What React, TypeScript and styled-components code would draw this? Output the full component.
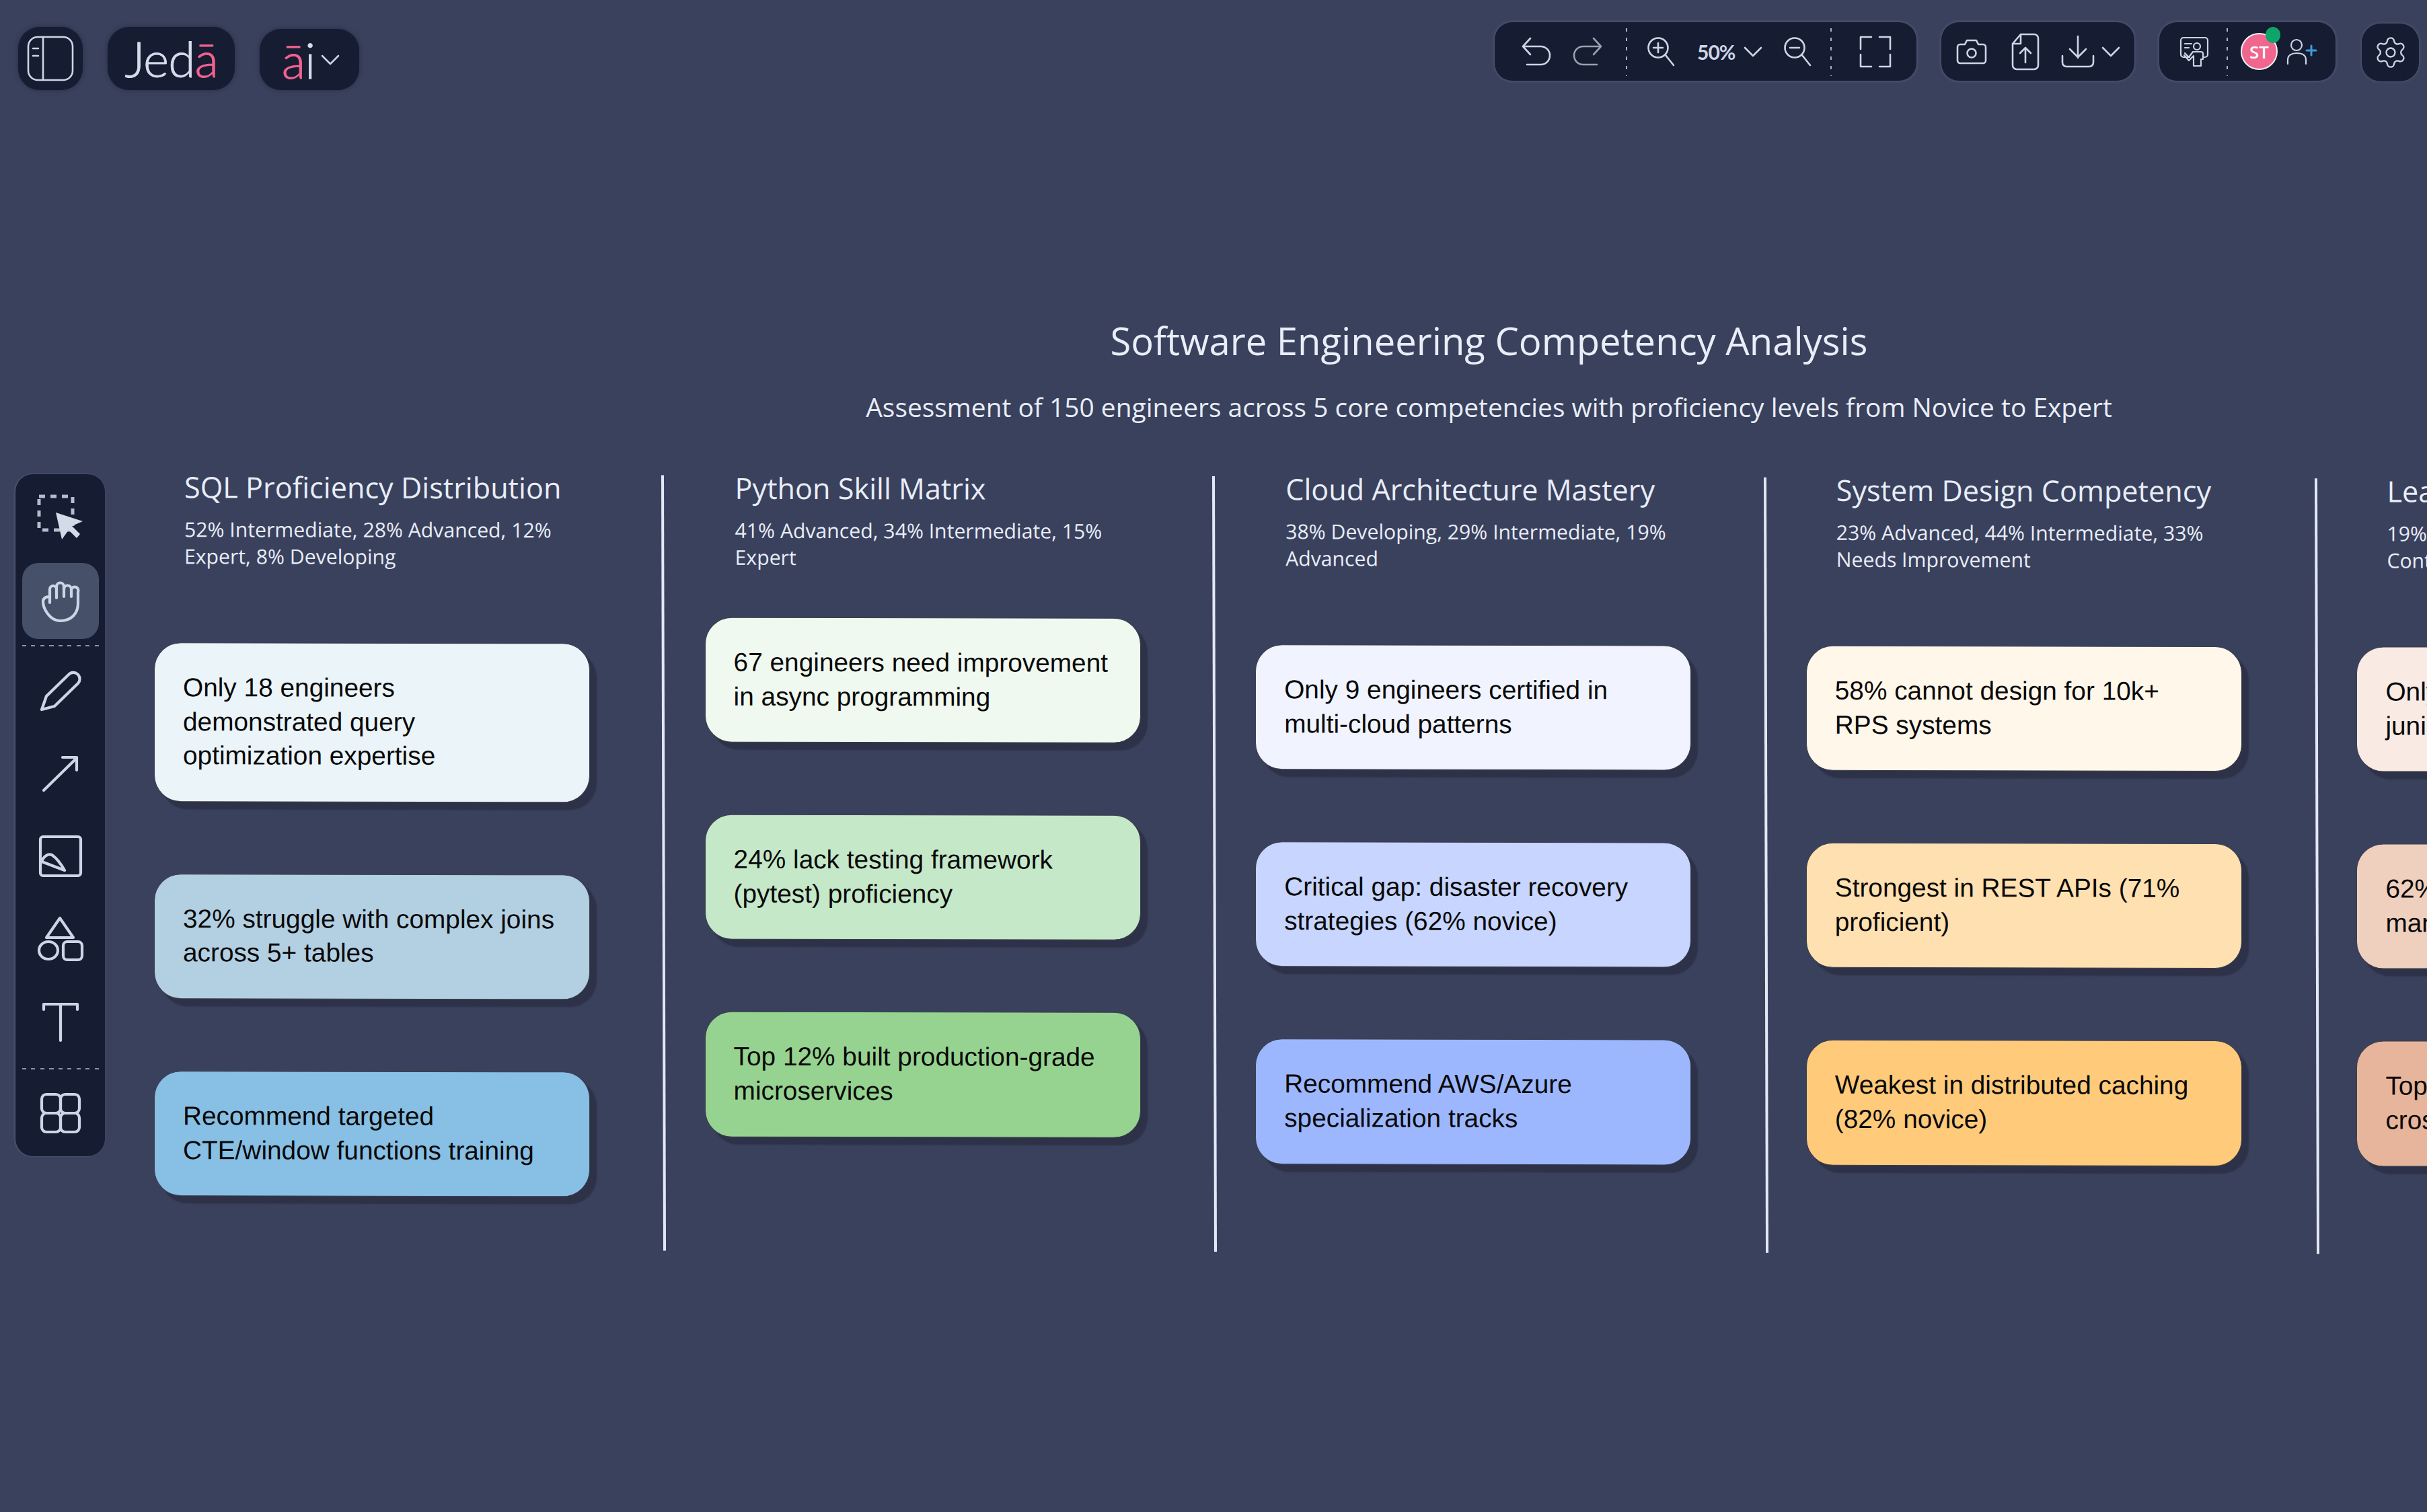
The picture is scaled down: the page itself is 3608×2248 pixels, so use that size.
import styled, { createGlobalStyle } from 'styled-components';
import { Settings } from 'lucide-react';

const GlobalStyle = createGlobalStyle`
  html, body {
    margin: 0;
    padding: 0;
    background: #3a415d;
  }
`;

type Finding = { lines: string[]; color: string };
type Competency = { title: string; summary: string[]; offset: number; cards: Finding[] };

const competencies: Competency[] = [
  {
    title: 'SQL Proficiency Distribution',
    summary: ['52% Intermediate, 28% Advanced, 12%', 'Expert, 8% Developing'],
    offset: 108,
    cards: [
      { lines: ['Only 18 engineers', 'demonstrated query', 'optimization expertise'], color: '#eaf4f9' },
      { lines: ['32% struggle with complex joins', 'across 5+ tables'], color: '#b3cfe2' },
      { lines: ['Recommend targeted', 'CTE/window functions training'], color: '#88bfe5' },
    ],
  },
  {
    title: 'Python Skill Matrix',
    summary: ['41% Advanced, 34% Intermediate, 15%', 'Expert'],
    offset: 69,
    cards: [
      { lines: ['67 engineers need improvement', 'in async programming'], color: '#f0f9f0' },
      { lines: ['24% lack testing framework', '(pytest) proficiency'], color: '#c5e8c9' },
      { lines: ['Top 12% built production-grade', 'microservices'], color: '#96d390' },
    ],
  },
  {
    title: 'Cloud Architecture Mastery',
    summary: ['38% Developing, 29% Intermediate, 19%', 'Advanced'],
    offset: 108,
    cards: [
      { lines: ['Only 9 engineers certified in', 'multi-cloud patterns'], color: '#f1f4ff' },
      { lines: ['Critical gap: disaster recovery', 'strategies (62% novice)'], color: '#c7d5ff' },
      { lines: ['Recommend AWS/Azure', 'specialization tracks'], color: '#9db7ff' },
    ],
  },
  {
    title: 'System Design Competency',
    summary: ['23% Advanced, 44% Intermediate, 33%', 'Needs Improvement'],
    offset: 108,
    cards: [
      { lines: ['58% cannot design for 10k+', 'RPS systems'], color: '#fff7ea' },
      { lines: ['Strongest in REST APIs (71%', 'proficient)'], color: '#ffe0b0' },
      { lines: ['Weakest in distributed caching', '(82% novice)'], color: '#ffca7a' },
    ],
  },
  {
    title: 'Leadership Readiness',
    summary: ['19% Ready, 47% Emerging, 34% Individual', 'Contributors'],
    offset: 108,
    cards: [
      { lines: ['Only 28 engineers mentor', 'junior team members'], color: '#f9eae3' },
      { lines: ['62% need stakeholder', 'management coaching'], color: '#efd0bf' },
      { lines: ['Top 15% lead initiatives', 'cross-functionally'], color: '#e7b59b' },
    ],
  },
];

function Chevron() {
  return (
    <IconSvg width="28" height="16" viewBox="0 0 28 16">
      <path d="M2 2 L14 14 L26 2" />
    </IconSvg>
  );
}

function App() {
  return (
    <Page>
      <GlobalStyle />
      <TopBar>
        <LeftGroup>
          <LogoButton $width={96}>
            <IconSvg width="70" height="68" viewBox="0 0 70 68">
              <rect x="2" y="2" width="66" height="64" rx="14" />
              <path d="M24 2 V66 M9 19 H17 M9 30 H17" />
            </IconSvg>
          </LogoButton>
          <LogoButton $width={189}>
            <LogoText>
              Jed<Pink>ā</Pink>
            </LogoText>
          </LogoButton>
          <AiButton>
            <LogoText>
              <Pink>ā</Pink>i
            </LogoText>
            <Chevron />
          </AiButton>
        </LeftGroup>
        <RightGroup>
          <Panel $left={25} $right={10}>
            <Slot $w={74}>
              <IconSvg width="44" height="42" viewBox="0 0 44 42">
                <path d="M13 1 L2 13 L13 25 M2 13 H28.5 a13.5 13.5 0 0 1 0 27 H8" />
              </IconSvg>
            </Slot>
            <Slot $w={78}>
              <IconSvg $dim width="44" height="42" viewBox="0 0 44 42">
                <path d="M31 1 L42 13 L31 25 M42 13 H15.5 a13.5 13.5 0 0 0 0 27 H36" />
              </IconSvg>
            </Slot>
            <DashV $w={38} />
            <Slot $w={66}>
              <IconSvg width="42" height="44" viewBox="0 0 42 44">
                <circle cx="16" cy="16" r="14.5" />
                <path d="M27 27 L39 42 M9 16 H23 M16 9 V23" />
              </IconSvg>
            </Slot>
            <ZoomValue>
              50%
              <Chevron />
            </ZoomValue>
            <Slot $w={68}>
              <IconSvg width="42" height="44" viewBox="0 0 42 44">
                <circle cx="16" cy="16" r="14.5" />
                <path d="M27 27 L39 42 M9 16 H23" />
              </IconSvg>
            </Slot>
            <DashV $w={30} />
            <Slot $w={102}>
              <IconSvg width="48" height="48" viewBox="0 0 48 48">
                <path d="M2 20 V2 H18 M30 2 H46 V20 M2 28 V46 H18 M30 46 H46 V28" />
              </IconSvg>
            </Slot>
          </Panel>
          <Panel $left={0} $right={4}>
            <Slot $w={90}>
              <IconSvg width="46" height="38" viewBox="0 0 46 38">
                <path d="M6 8 H13 L16 2 H30 L33 8 H40 a4 4 0 0 1 4 4 V32 a4 4 0 0 1 -4 4 H6 a4 4 0 0 1 -4 -4 V12 a4 4 0 0 1 4 -4 Z" />
                <circle cx="23" cy="21" r="6.5" />
              </IconSvg>
            </Slot>
            <Slot $w={70}>
              <IconSvg width="42" height="56" viewBox="0 0 42 56">
                <path d="M14 2 H34 a6 6 0 0 1 6 6 V48 a6 6 0 0 1 -6 6 H8 a6 6 0 0 1 -6 -6 V16 Z M14 2 V16 H2 M21 44 V22 M13 30 L21 22 L29 30" />
              </IconSvg>
            </Slot>
            <Slot $w={123} $gap={10}>
              <IconSvg width="50" height="50" viewBox="0 0 50 50">
                <path d="M25 2 V34 M13 21 L25 33 L37 21 M2 31 V41 a6 6 0 0 0 6 6 H42 a6 6 0 0 0 6 -6 V31" />
              </IconSvg>
              <Chevron />
            </Slot>
          </Panel>
          <Panel $left={4} $right={14}>
            <Slot $w={96}>
              <IconSvg $thin width="42" height="44" viewBox="0 0 42 44">
                <path d="M14 30 H5 a4 4 0 0 1 -4 -4 V5 a4 4 0 0 1 4 -4 H37 a4 4 0 0 1 4 4 V26 a4 4 0 0 1 -4 4 H36" />
                <path d="M7 10 H17 M7 16 H13" />
                <circle cx="25" cy="14" r="5" />
                <path d="M7 24 L13 30 L19 22 H31 a3 3 0 0 1 3 3 V33 H31 V43 H20 V28 L13 35 L6 27" />
              </IconSvg>
            </Slot>
            <DashV $w={2} />
            <Avatar>
              ST
              <StatusDot />
            </Avatar>
            <Slot $w={72}>
              <IconSvg $thin width="46" height="38" viewBox="0 0 46 38">
                <circle cx="15" cy="9" r="8" />
                <path d="M2 37 V31 C2 24 8 21 15 21 C23 21 29 24 29 31 V37" />
                <PlusPath d="M37 10 V24 M30 17 H44" />
              </IconSvg>
            </Slot>
          </Panel>
          <GearPanel>
            <Settings size={52} strokeWidth={1.1} />
          </GearPanel>
        </RightGroup>
      </TopBar>

      <ToolRail>
        <ToolSlot $h={130}>
          <IconSvg width="70" height="70" viewBox="0 0 70 70">
            <DashedRect x="3" y="3" width="50" height="50" />
            <CursorShape points="28,27 68,40 52,47 64,59 59,65 47,53 37,67" />
          </IconSvg>
        </ToolSlot>
        <ActiveTool>
          <IconSvg $bold width="58" height="62" viewBox="0 0 58 62">
            <path d="M3 31 C3 26 9 23 13 25 V13 a5 5 0 0 1 10 0 V9 a5.5 5.5 0 0 1 11 0 V13 a5.5 5.5 0 0 1 11 0 a5 5 0 0 1 10 4 V34 C55 50 44 60 29 60 C17 60 11 52 7 45 C4 40 3 36 3 31 Z" />
            <path d="M13 24 V33 M23 13 V26 M34 9 V24 M45 13 V24" />
          </IconSvg>
        </ActiveTool>
        <DashH />
        <ToolSlot $h={124}>
          <IconSvg $bold width="62" height="62" viewBox="0 0 62 62">
            <path d="M3 59 L10 39 L43 7 a9.5 9.5 0 0 1 14 13 L22 54 Z" />
          </IconSvg>
        </ToolSlot>
        <ToolSlot $h={122}>
          <IconSvg $bold width="54" height="54" viewBox="0 0 54 54">
            <path d="M2 52 L51 4 M30 3 H51 V22" />
          </IconSvg>
        </ToolSlot>
        <ToolSlot $h={123}>
          <IconSvg $bold width="66" height="64" viewBox="0 0 66 64">
            <rect x="3" y="3" width="60" height="58" rx="4" />
            <path d="M5 40 C8 32 14 28 20 30 C26 34 34 44 39 53 Z" />
          </IconSvg>
        </ToolSlot>
        <ToolSlot $h={124}>
          <IconSvg $bold width="68" height="68" viewBox="0 0 68 68">
            <path d="M33 3 L13 32 H53 Z" />
            <ellipse cx="16" cy="51" rx="14" ry="13" />
            <rect x="38" y="38" width="28" height="27" rx="6" />
          </IconSvg>
        </ToolSlot>
        <ToolSlot $h={121}>
          <IconSvg $bold width="54" height="58" viewBox="0 0 54 58">
            <path d="M2 11 V3 H52 V11 M27 3 V57" />
          </IconSvg>
        </ToolSlot>
        <DashH />
        <ToolSlot $h={122}>
          <IconSvg $bold width="62" height="62" viewBox="0 0 62 62">
            <rect x="3" y="3" width="28" height="28" rx="7" />
            <rect x="31" y="3" width="28" height="28" rx="7" />
            <rect x="3" y="31" width="28" height="28" rx="7" />
            <rect x="31" y="31" width="28" height="28" rx="7" />
          </IconSvg>
        </ToolSlot>
      </ToolRail>

      <Board>
        <BoardTitle>Software Engineering Competency Analysis</BoardTitle>
        <BoardSubtitle>Assessment of 150 engineers across 5 core competencies with proficiency levels from Novice to Expert</BoardSubtitle>
        <Columns>
          {competencies.map((item, index) => (
            <Column key={item.title}>
              <ColumnBody>
                <ColumnTitle>{item.title}</ColumnTitle>
                <ColumnSummary>
                  {item.summary.map((line) => (
                    <div key={line}>{line}</div>
                  ))}
                </ColumnSummary>
                <CardStack $offset={item.offset}>
                  {item.cards.map((card) => (
                    <Card key={card.lines[0]} $color={card.color}>
                      {card.lines.map((line) => (
                        <div key={line}>{line}</div>
                      ))}
                    </Card>
                  ))}
                </CardStack>
              </ColumnBody>
              {index < competencies.length - 1 && <Separator $nudge={index - 3} />}
            </Column>
          ))}
        </Columns>
      </Board>
    </Page>
  );
}

export default App;

const Page = styled.div`
  position: relative;
  width: 3608px;
  height: 2248px;
  padding-top: 33px;
  box-sizing: border-box;
  overflow: hidden;
  background: #3a415d;
`;

const TopBar = styled.header`
  display: flex;
  justify-content: space-between;
  align-items: flex-start;
  padding: 0 12px 0 27px;
  height: 101px;
`;

const LeftGroup = styled.div`
  display: flex;
  align-items: flex-end;
  gap: 37px;
  height: 101px;
`;

const LogoButton = styled.div<{ $width: number }>`
  display: flex;
  align-items: center;
  justify-content: center;
  width: ${(p) => p.$width}px;
  height: 94px;
  background: #161c32;
  border-radius: 32px;
  box-shadow: 0 0 6px rgba(20, 25, 45, 0.5);
`;

const AiButton = styled(LogoButton).attrs({ $width: 148 })`
  height: 91px;
  gap: 9px;
  padding-left: 4px;
  box-sizing: border-box;
`;

const LogoText = styled.span`
  font-family: 'Lato', 'Liberation Sans', sans-serif;
  font-weight: 300;
  font-size: 73px;
  line-height: 72px;
  letter-spacing: -1px;
  -webkit-text-stroke: 0.8px currentColor;
  color: #d6dcea;
`;

const Pink = styled.span`
  color: #f2628f;
`;

const RightGroup = styled.div`
  display: flex;
  align-items: flex-start;
  gap: 37px;
`;

const Panel = styled.div<{ $left: number; $right: number }>`
  display: flex;
  align-items: center;
  height: 87px;
  padding: 0 ${(p) => p.$right}px 0 ${(p) => p.$left}px;
  background: #161c32;
  border-radius: 26px;
  box-shadow: 0 0 5px rgba(120, 130, 160, 0.55);
`;

const GearPanel = styled.div`
  display: flex;
  align-items: center;
  justify-content: center;
  width: 85px;
  height: 86px;
  margin: 2px 0 0 2px;
  color: #ccd3e4;
  background: #161c32;
  border-radius: 28px;
  box-shadow: 0 0 5px rgba(120, 130, 160, 0.45);
`;

const Slot = styled.div<{ $w: number; $gap?: number }>`
  display: flex;
  align-items: center;
  justify-content: center;
  gap: ${(p) => p.$gap ?? 0}px;
  width: ${(p) => p.$w}px;
`;

const DashV = styled.div<{ $w: number }>`
  align-self: stretch;
  width: ${(p) => p.$w}px;
  margin: 9px 0 7px;
  background: repeating-linear-gradient(to bottom, #aab2c6 0 5px, transparent 5px 14px) center / 2px 100% no-repeat;
`;

const IconSvg = styled.svg<{ $dim?: boolean; $bold?: boolean; $thin?: boolean }>`
  display: block;
  flex: none;
  overflow: visible;
  fill: none;
  stroke: ${(p) => (p.$dim ? '#98a0ae' : '#ccd5e6')};
  stroke-width: ${(p) => (p.$bold ? 4.2 : p.$thin ? 2.2 : 2.6)};
  stroke-linecap: round;
  stroke-linejoin: round;
`;

const PlusPath = styled.path`
  stroke: #3d9bdc;
  stroke-width: 3;
`;

const ZoomValue = styled.div`
  display: flex;
  align-items: center;
  gap: 13px;
  width: 136px;
  padding-left: 20px;
  box-sizing: border-box;
  font-family: 'Lato', 'Liberation Sans', sans-serif;
  font-weight: 700;
  font-size: 30px;
  letter-spacing: -1px;
  color: #ccd5e6;
`;

const Avatar = styled.div`
  position: relative;
  display: flex;
  align-items: center;
  justify-content: center;
  width: 55px;
  height: 55px;
  margin: 0 0 0 19px;
  box-sizing: border-box;
  border: 2px solid #f1f3f8;
  border-radius: 50%;
  background: #f0668d;
  font-family: 'Open Sans', 'Liberation Sans', sans-serif;
  font-size: 26px;
  font-weight: 600;
  color: #ffffff;
`;

const StatusDot = styled.span`
  position: absolute;
  top: -11px;
  right: -6px;
  width: 22px;
  height: 24px;
  border-radius: 50%;
  background: #0ea56b;
`;

const ToolRail = styled.aside`
  position: absolute;
  top: 705px;
  left: 23px;
  z-index: 2;
  display: flex;
  flex-direction: column;
  align-items: center;
  width: 133px;
  height: 1014px;
  background: #161c32;
  border-radius: 26px;
  box-shadow: -1px 0 3px rgba(120, 130, 160, 0.5);
`;

const ToolSlot = styled.div<{ $h: number }>`
  display: flex;
  align-items: center;
  justify-content: center;
  flex: none;
  width: 100%;
  height: ${(p) => p.$h}px;
`;

const ActiveTool = styled.div`
  display: flex;
  align-items: center;
  justify-content: center;
  flex: none;
  width: 114px;
  height: 113px;
  margin-top: 2px;
  background: #475069;
  border-radius: 24px;
`;

const DashH = styled.div`
  flex: none;
  width: 114px;
  height: 2px;
  margin: 9px 0 4px;
  background: repeating-linear-gradient(to right, #8d95aa 0 6px, transparent 6px 13.5px);
`;

const DashedRect = styled.rect`
  stroke: #b4bcd0;
  stroke-width: 5;
  stroke-dasharray: 9 8;
  stroke-linecap: butt;
`;

const CursorShape = styled.polygon`
  fill: #d3dae8;
  stroke: none;
`;

const Board = styled.main`
  width: 4093px;
  margin-left: 167px;
`;

const BoardTitle = styled.h1`
  margin: 337px 0 0;
  line-height: 70px;
  text-align: center;
  font-family: 'Open Sans', 'Liberation Sans', sans-serif;
  font-size: 56.2px;
  font-weight: 400;
  color: #e8edf7;
`;

const BoardSubtitle = styled.p`
  margin: 34px 0 0;
  line-height: 60px;
  text-align: center;
  font-family: 'Open Sans', 'Liberation Sans', sans-serif;
  font-size: 38.9px;
  color: #e8edf7;
`;

const Columns = styled.section`
  display: flex;
  margin-top: 70px;
  transform: matrix(1, 0.0019, 0, 1, 0, 0);
  transform-origin: 0 0;
`;

const Column = styled.div`
  display: flex;
  flex: none;
  width: 818.6px;
  height: 1153px;
  font-family: 'Open Sans', 'Liberation Sans', sans-serif;
  color: #e8edf7;
`;

const ColumnBody = styled.div`
  flex: none;
  box-sizing: border-box;
  width: 818.6px;
  padding-left: 62px;
`;

const Separator = styled.div<{ $nudge: number }>`
  flex: none;
  width: 4px;
  height: 1153px;
  margin-left: ${(p) => p.$nudge}px;
  margin-right: ${(p) => -4 - p.$nudge}px;
  background: #e3e8f5;
  transform: skewX(0.15deg);
  transform-origin: 0 0;
`;

const ColumnTitle = styled.h2`
  margin: 1px 0 0 45px;
  font-size: 43.2px;
  font-weight: 400;
  line-height: 36px;
  white-space: nowrap;
`;

const ColumnSummary = styled.div`
  margin: 25px 0 0 45px;
  font-size: 30.2px;
  line-height: 40px;
  white-space: nowrap;
`;

const CardStack = styled.div<{ $offset: number }>`
  display: flex;
  flex-direction: column;
  gap: 107px;
  margin-top: ${(p) => p.$offset}px;
`;

const Card = styled.div<{ $color: string }>`
  box-sizing: border-box;
  width: 648px;
  padding: 41px 42px 42px;
  background: ${(p) => p.$color};
  border: 1.5px solid #3c3f4c;
  border-radius: 40px;
  box-shadow: 10px 11px 2px #2d3248;
  font-family: 'Liberation Sans', Arial, sans-serif;
  font-size: 38.8px;
  line-height: 50.6px;
  color: #0a0a0a;
  white-space: nowrap;
`;
